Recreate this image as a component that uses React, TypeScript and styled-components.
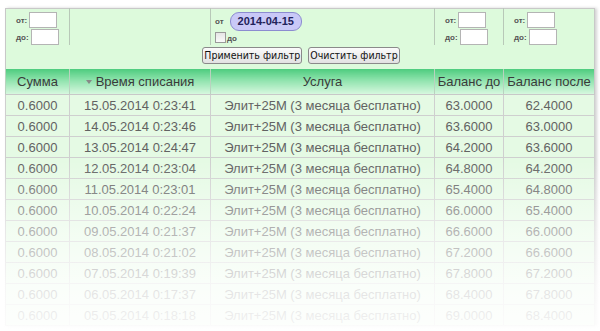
import React from 'react';
import styled, { createGlobalStyle } from 'styled-components';

const GlobalStyle = createGlobalStyle`
  html, body {
    margin: 0;
    padding: 0;
    background: #ffffff;
  }
  body {
    font-family: 'Liberation Sans', Arial, sans-serif;
  }
`;

const Page = styled.div`
  position: relative;
  width: 600px;
  height: 331px;
  overflow: hidden;
  padding: 8px 0 0 5px;
  box-sizing: border-box;
`;

const Fade = styled.div`
  position: absolute;
  left: 0;
  right: 0;
  top: 160px;
  bottom: 0;
  pointer-events: none;
  background: linear-gradient(
    to bottom,
    rgba(255, 255, 255, 0) 0%,
    rgba(255, 255, 255, 0.5) 40%,
    rgba(255, 255, 255, 0.82) 75%,
    rgba(255, 255, 255, 0.92) 100%
  );
`;

const Table = styled.table`
  width: 589px;
  border-collapse: collapse;
  table-layout: fixed;
  border: 1px solid #c8c8c8;
  box-shadow: 2px 0 3px rgba(0, 0, 0, 0.18);
  font-size: 13px;
  color: #626262;
`;

const FilterCell = styled.td`
  background: #ddfadc;
  padding: 0;
  vertical-align: top;
  height: 36px;
  border-left: 1px solid #b8c8b8;
  &:first-child {
    border-left: none;
  }
`;

const FilterInner = styled.div`
  display: flex;
  flex-direction: column;
  gap: 1px;
  padding: 3px 0 0 10px;
`;

const RangeLine = styled.label`
  display: flex;
  align-items: center;
  gap: 2px;
  font-size: 8px;
  font-weight: bold;
  color: #555;
`;

const SmallInput = styled.span`
  display: inline-block;
  width: 26px;
  height: 14px;
  background: #fff;
  border: 1px solid #b4b4b4;
`;

const DateCell = styled.div`
  display: flex;
  flex-direction: column;
  padding: 3px 0 0 4px;
`;

const DateLine = styled.div`
  display: flex;
  align-items: center;
  gap: 6px;
  font-size: 8px;
  font-weight: bold;
  color: #555;
`;

const DatePill = styled.span`
  display: inline-block;
  padding: 2px 7px 2px;
  border: 1px solid #8c8cd0;
  border-radius: 9px;
  background: #c9c9f7;
  color: #22225a;
  font-size: 11px;
  line-height: 13px;
  font-weight: bold;
`;

const CheckLine = styled.div`
  display: flex;
  align-items: flex-end;
  gap: 1px;
  margin-top: 1px;
  font-size: 8px;
  font-weight: bold;
  color: #555;
`;

const CheckBox = styled.span`
  display: inline-block;
  width: 9px;
  height: 9px;
  border: 1px solid #9a9a9a;
  background: linear-gradient(#e6e6e6, #fafafa);
`;

const ButtonsCell = styled.td`
  background: #ddfadc;
  padding: 2px 0 5px;
  text-align: center;
`;

const Buttons = styled.div`
  display: flex;
  justify-content: center;
  gap: 6px;
  padding-left: 2px;
`;

const Button = styled.button`
  font-family: 'DejaVu Sans Condensed', 'DejaVu Sans', sans-serif;
  font-size: 10.5px;
  color: #111;
  padding: 1px 1px;
  border: 1px solid #8a8a8a;
  border-radius: 3px;
  background: linear-gradient(#fbfbfb, #e2e2e2);
  line-height: 13px;
`;

const HeadCell = styled.th`
  height: 25px;
  padding: 0;
  font-weight: normal;
  color: #3a3a3a;
  font-size: 13px;
  border-left: 1px solid #b9d2bf;
  background: linear-gradient(#4ecc7e 0%, #8fe3ad 45%, #d6f7de 100%);
  border-bottom: 1px solid #c8c8c8;
  white-space: nowrap;
`;

const SortArrow = styled.span`
  display: inline-block;
  width: 0;
  height: 0;
  border-left: 3px solid transparent;
  border-right: 3px solid transparent;
  border-top: 4px solid #888;
  margin-right: 4px;
  vertical-align: 2px;
`;

const Row = styled.tr`
  background: #e5fae4;
`;

const Cell = styled.td`
  height: 20px;
  padding: 0;
  text-align: center;
  border: 1px solid #cfcfcf;
  white-space: nowrap;
`;

const rows = [
  ['15.05.2014 0:23:41', '63.0000', '62.4000'],
  ['14.05.2014 0:23:46', '63.6000', '63.0000'],
  ['13.05.2014 0:24:47', '64.2000', '63.6000'],
  ['12.05.2014 0:23:04', '64.8000', '64.2000'],
  ['11.05.2014 0:23:01', '65.4000', '64.8000'],
  ['10.05.2014 0:22:24', '66.0000', '65.4000'],
  ['09.05.2014 0:21:37', '66.6000', '66.0000'],
  ['08.05.2014 0:21:02', '67.2000', '66.6000'],
  ['07.05.2014 0:19:39', '67.8000', '67.2000'],
  ['06.05.2014 0:17:37', '68.4000', '67.8000'],
  ['05.05.2014 0:18:18', '69.0000', '68.4000'],
];

const Range: React.FC = () => (
  <FilterInner>
    <RangeLine>
      от: <SmallInput />
    </RangeLine>
    <RangeLine>
      до: <SmallInput />
    </RangeLine>
  </FilterInner>
);

const App: React.FC = () => (
  <Page>
    <GlobalStyle />
    <Table>
      <colgroup>
        <col style={{ width: 64 }} />
        <col style={{ width: 141 }} />
        <col style={{ width: 224 }} />
        <col style={{ width: 69 }} />
        <col style={{ width: 91 }} />
      </colgroup>
      <tbody>
        <tr>
          <FilterCell>
            <Range />
          </FilterCell>
          <FilterCell />
          <FilterCell>
            <DateCell>
              <DateLine>
                от <DatePill>2014-04-15</DatePill>
              </DateLine>
              <CheckLine>
                <CheckBox />
                до
              </CheckLine>
            </DateCell>
          </FilterCell>
          <FilterCell>
            <Range />
          </FilterCell>
          <FilterCell>
            <Range />
          </FilterCell>
        </tr>
        <tr>
          <ButtonsCell colSpan={5}>
            <Buttons>
              <Button>Применить фильтр</Button>
              <Button>Очистить фильтр</Button>
            </Buttons>
          </ButtonsCell>
        </tr>
        <tr>
          <HeadCell>Сумма</HeadCell>
          <HeadCell>
            <SortArrow />
            Время списания
          </HeadCell>
          <HeadCell>Услуга</HeadCell>
          <HeadCell>Баланс до</HeadCell>
          <HeadCell>Баланс после</HeadCell>
        </tr>
        {rows.map(([date, before, after]) => (
          <Row key={date}>
            <Cell>0.6000</Cell>
            <Cell>{date}</Cell>
            <Cell>Элит+25М (3 месяца бесплатно)</Cell>
            <Cell>{before}</Cell>
            <Cell>{after}</Cell>
          </Row>
        ))}
      </tbody>
    </Table>
    <Fade />
  </Page>
);

export default App;
